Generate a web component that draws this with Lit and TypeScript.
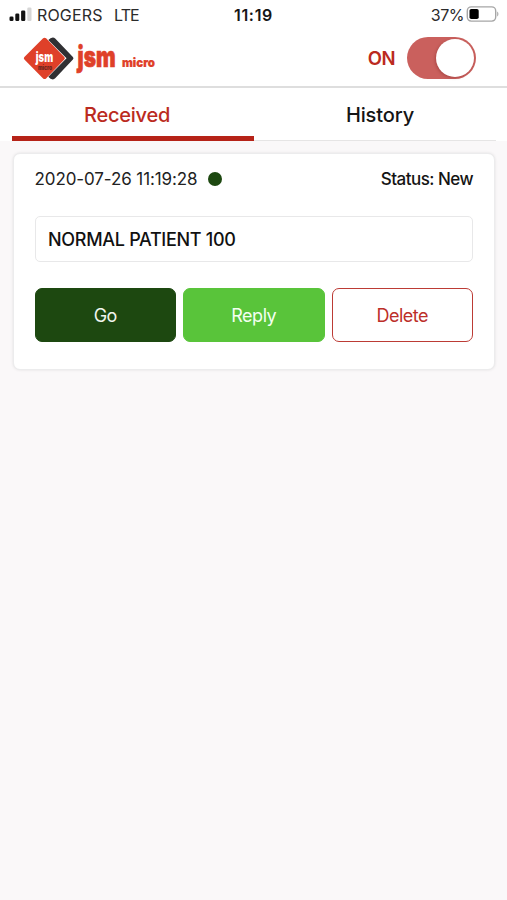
import { LitElement, html, css, svg } from "lit";
import { customElement, property } from "lit/decorators.js";

@customElement("status-bar")
class StatusBar extends LitElement {
  static styles = css`
    :host { display: grid; grid-template-columns: 1fr auto 1fr; align-items: center; height: 30px; color: #2b2b2b; font-size: 16px; line-height: 30px; }
    .left, .right { display: flex; align-items: center; }
    .left { padding-left: 9px; }
    .right { justify-content: flex-end; padding-right: 8px; }
    .signal { width: 23px; height: 16px; margin: -2px 5px 0 0; }
    .carrier { letter-spacing: 0.15px; }
    .network { margin-left: 11.5px; letter-spacing: -0.9px; }
    .time { font-weight: 600; color: #161616; letter-spacing: 0.7px; }
    .percent { letter-spacing: -0.5px; }
    .battery { width: 33px; height: 18px; margin: -2px 0 0 2px; }
  `;
  render() {
    return html`
      <div class="left">
        <svg class="signal" viewBox="0 0 23 16">
          <rect x="0.5" y="10.5" width="4" height="4.5" rx="1.3" fill="#111" />
          <rect x="6.3" y="7.5" width="4" height="7.5" rx="1.3" fill="#111" />
          <rect x="12.1" y="4.5" width="4.2" height="10.5" rx="1.3" fill="#111" />
          <rect x="18.3" y="1.5" width="4.2" height="13.5" rx="1.3" fill="#d6d6d6" />
        </svg>
        <span class="carrier">ROGERS</span><span class="network">LTE</span>
      </div>
      <div class="time">11:19</div>
      <div class="right">
        <span class="percent">37%</span>
        <svg class="battery" viewBox="0 0 33 18">
          <rect x="1.3" y="1.9" width="28.4" height="14.2" rx="4" fill="none" stroke="#a6a6a6" stroke-width="1.4" />
          <rect x="3.5" y="4" width="9.2" height="10" rx="1.8" fill="#000" />
          <path d="M31.2 6.5c1.6.7 1.6 4.3 0 5z" fill="#a6a6a6" />
        </svg>
      </div>`;
  }
}

@customElement("brand-logo")
class BrandLogo extends LitElement {
  static styles = css`
    :host { display: block; width: 134px; height: 44px; margin-top: 2px; }
    .art { display: block; width: 134px; height: 44px; font-family: Inter, "Liberation Sans", sans-serif; font-weight: 900; }
  `;
  render() {
    return html`<svg class="art" viewBox="0 0 134 44">${svg`
      <path d="M25.3 3Q27.5 .4 29.8 .4Q31.2 .4 32.2 1.5L49.9 19.9Q51.1 21.2 49.9 22.5L32.2 41.3Q31.2 42.4 29.8 42.4Q27.5 42.4 25.3 39.8L43.5 21.3Z" fill="#303033" />
      <path d="M20.1 1.3Q21.6 0 23.1 1.3L41.3 20Q42.5 21.2 41.3 22.5L23.1 41.4Q21.6 42.7 20.1 41.4L1.4 22.5Q.2 21.2 1.4 20Z" fill="#df4029" />
      <text transform="translate(12.8 25) scale(.72 1)" font-size="13.5" fill="#fff" textLength="24" lengthAdjust="spacingAndGlyphs">jsm</text>
      <text x="15" y="32.6" font-size="5.5" fill="#6a251d" textLength="14" lengthAdjust="spacingAndGlyphs">micro</text>
      <text transform="translate(54.5 30) scale(.72 1)" font-size="29" fill="#df4029" stroke="#df4029" stroke-width="0.7" textLength="52.8" lengthAdjust="spacingAndGlyphs">jsm</text>
      <text transform="translate(99 29.5) scale(.82 1)" font-size="12.5" fill="#df4029" stroke="#df4029" stroke-width="0.2" textLength="40.2" lengthAdjust="spacingAndGlyphs">micro</text>
    `}</svg>`;
  }
}

@customElement("toggle-switch")
class ToggleSwitch extends LitElement {
  static styles = css`
    :host { display: flex; align-items: center; gap: 12px; }
    .label { color: #bb2a20; font-size: 18.5px; font-weight: 600; line-height: 24px; letter-spacing: -0.5px; }
    .track { box-sizing: border-box; width: 69px; height: 42px; padding: 2px; border-radius: 21px; background: #ca605d; display: flex; justify-content: flex-end; }
    .thumb { width: 38px; height: 38px; border-radius: 50%; background: #fff; box-shadow: -1px 1px 3px rgba(80, 0, 0, 0.25); }
  `;
  render() {
    return html`<span class="label">ON</span><div class="track"><div class="thumb"></div></div>`;
  }
}

@customElement("message-card")
class MessageCard extends LitElement {
  @property() date = "";
  @property() status = "";
  @property() message = "";
  static styles = css`
    :host { display: block; box-sizing: border-box; height: 217px; margin: 12px 12px 0 13px; padding: 13px 21px 0 20.5px; border: 1px solid #ececed; border-radius: 7px; background: #fff; box-shadow: 0 0 3px rgba(0, 0, 0, 0.1); }
    .meta { display: flex; align-items: center; height: 24px; font-size: 17px; line-height: 24px; }
    .date { color: #222; letter-spacing: -0.1px; }
    .dot { width: 14px; height: 14px; margin-left: 10px; border-radius: 50%; background: #1d4810; }
    .status { margin-left: auto; color: #141414; font-weight: 500; letter-spacing: -0.53px; }
    .message { box-sizing: border-box; height: 46px; margin-top: 25px; padding-left: 12.5px; border: 1px solid #e8e8e9; border-radius: 5px; color: #111; font-size: 18px; font-weight: 500; line-height: 45px; letter-spacing: -0.3px; }
    .actions { display: grid; grid-template-columns: repeat(3, 1fr); gap: 7px; margin-top: 26px; }
    .btn { box-sizing: border-box; height: 54px; border: 1.5px solid transparent; border-radius: 7px; font-size: 18px; line-height: 53px; text-align: center; letter-spacing: -0.5px; }
    .go { background: #1d4810; border-color: #1d4810; color: #f0f5ee; }
    .reply { background: #59c43a; border-color: #59c43a; color: #f3fff0; }
    .delete { border-color: #bc3b35; color: #bc2f29; }
  `;
  render() {
    return html`
      <div class="meta"><span class="date">${this.date}</span><span class="dot"></span><span class="status">Status: ${this.status}</span></div>
      <div class="message">${this.message}</div>
      <div class="actions">
        <div class="btn go">Go</div>
        <div class="btn reply">Reply</div>
        <div class="btn delete">Delete</div>
      </div>`;
  }
}

@customElement("app-root")
class AppRoot extends LitElement {
  static styles = css`
    :host { display: block; min-height: 900px; background: #faf8f9; font-family: Inter, "Liberation Sans", sans-serif; }
    .top { background: #fff; }
    .header { display: flex; align-items: center; justify-content: space-between; box-sizing: border-box; height: 58px; padding: 0 31px 0 23px; border-bottom: 2px solid #dedede; }
    .tabs { display: grid; grid-template-columns: 1fr 1fr; grid-template-rows: 53px; padding: 0 11px 0 12px; }
    .tab { box-sizing: border-box; height: 53px; border-bottom: 1px solid #e6e5e5; color: #151515; font-size: 20px; font-weight: 500; line-height: 54px; text-align: center; }
    .active { padding-right: 12px; border-bottom: 5px solid #b62318; color: #bb2a20; letter-spacing: -0.25px; }
    .idle { padding-left: 10px; letter-spacing: -0.1px; }
  `;
  render() {
    return html`
      <div class="top">
        <status-bar></status-bar>
        <div class="header"><brand-logo></brand-logo><toggle-switch></toggle-switch></div>
        <div class="tabs"><div class="tab active">Received</div><div class="tab idle">History</div></div>
      </div>
      <message-card date="2020-07-26 11:19:28" status="New" message="NORMAL PATIENT 100"></message-card>`;
  }
}
